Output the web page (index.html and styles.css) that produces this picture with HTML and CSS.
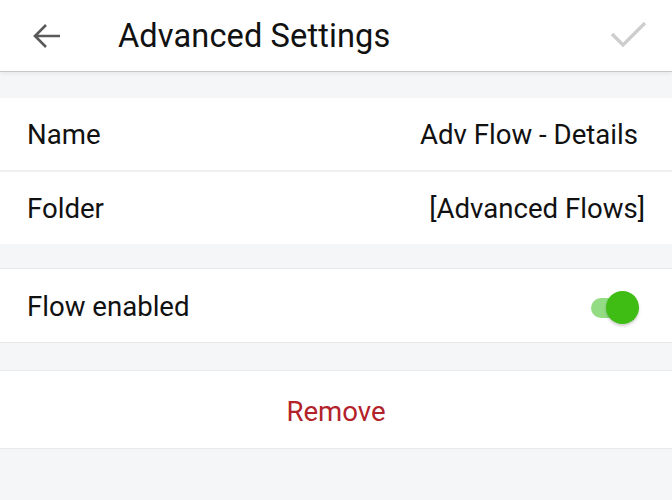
FILE: index.html
```html
<!DOCTYPE html>
<html>
<head>
<meta charset="utf-8">
<link rel="stylesheet" href="styles.css">
</head>
<body>
<div class="app">
  <header class="topbar">
    <button class="icon-btn back" aria-label="Back">
      <svg width="30" height="26" viewBox="0 0 30 26"><path d="M28 13H3M14 2L3 13l11 11" fill="none" stroke="#5a5a5a" stroke-width="2.6" stroke-linecap="butt" stroke-linejoin="miter"/></svg>
    </button>
    <h1 class="title">Advanced Settings</h1>
    <button class="icon-btn check" aria-label="Save">
      <svg width="38" height="28" viewBox="0 0 38 28"><path d="M2 13l11 11L35 2" fill="none" stroke="#cdcdcd" stroke-width="3.2"/></svg>
    </button>
  </header>

  <div class="gap gap-top"></div>

  <section class="group">
    <div class="row">
      <span class="label">Name</span>
      <span class="value value-name">Adv Flow - Details</span>
    </div>
    <div class="divider"></div>
    <div class="row">
      <span class="label">Folder</span>
      <span class="value">[Advanced Flows]</span>
    </div>
  </section>

  <div class="gap gap-mid"></div>

  <section class="group bordered">
    <div class="row row-flow">
      <span class="label">Flow enabled</span>
      <span class="toggle"><span class="track"></span><span class="thumb"></span></span>
    </div>
  </section>

  <div class="gap gap-mid2"></div>

  <section class="group bordered">
    <div class="row row-remove">
      <span class="remove">Remove</span>
    </div>
  </section>
</div>
</body>
</html>
```

FILE: styles.css
```css
* { box-sizing: border-box; }
html, body { margin: 0; padding: 0; }
body {
  background: #f5f6f8;
  font-family: Roboto, "Noto Sans", Arial, sans-serif;
  color: #111;
  width: 672px;
  height: 500px;
  overflow: hidden;
}
.app { display: flex; flex-direction: column; }
.topbar {
  height: 72px;
  background: #fff;
  border-bottom: 1px solid #c9c9c9;
  box-shadow: 0 2px 4px rgba(0,0,0,0.06);
  display: flex;
  align-items: center;
  padding: 0 24px 0 32px;
  position: relative;
  z-index: 1;
}
.icon-btn {
  background: none;
  border: 0;
  padding: 0;
  display: flex;
  align-items: center;
}
.back { width: 30px; height: 26px; }
.title {
  margin: 0 0 0 56px;
  font-weight: 400;
  font-size: 32.6px;
  color: #111;
  flex: 1;
  letter-spacing: 0.1px;
}
.check { width: 38px; height: 28px; margin-top: -1px; }
.gap-top { height: 26px; }
.gap-mid { height: 24px; }
.gap-mid2 { height: 27px; }
.group { background: #fff; }
.bordered { border-top: 1px solid #e8e9eb; border-bottom: 1px solid #e8e9eb; }
.row {
  height: 72px;
  display: flex;
  align-items: center;
  justify-content: space-between;
  padding: 0 27px;
  font-size: 27.6px;
}
.row-flow { height: 73px; padding-top: 2px; }
.divider { height: 2px; background: #f0f0f0; margin: 0; }
.label { color: #111; }
.value { color: #111; }
.value-name { margin-right: 7px; }
.toggle {
  position: relative;
  width: 52px;
  height: 36px;
  margin-right: 5px;
}
.track {
  position: absolute;
  left: 3px; top: 9px;
  width: 40px; height: 20px;
  border-radius: 10px;
  background: #93dc84;
}
.thumb {
  position: absolute;
  left: 18px; top: 2px;
  width: 33px; height: 33px;
  border-radius: 50%;
  background: #3fbd14;
  box-shadow: 0 2px 3px rgba(0,0,0,0.2);
}
.row-remove {
  height: 77px;
  justify-content: center;
  padding-top: 4px;
}
.remove { color: #b3222a; }
```
